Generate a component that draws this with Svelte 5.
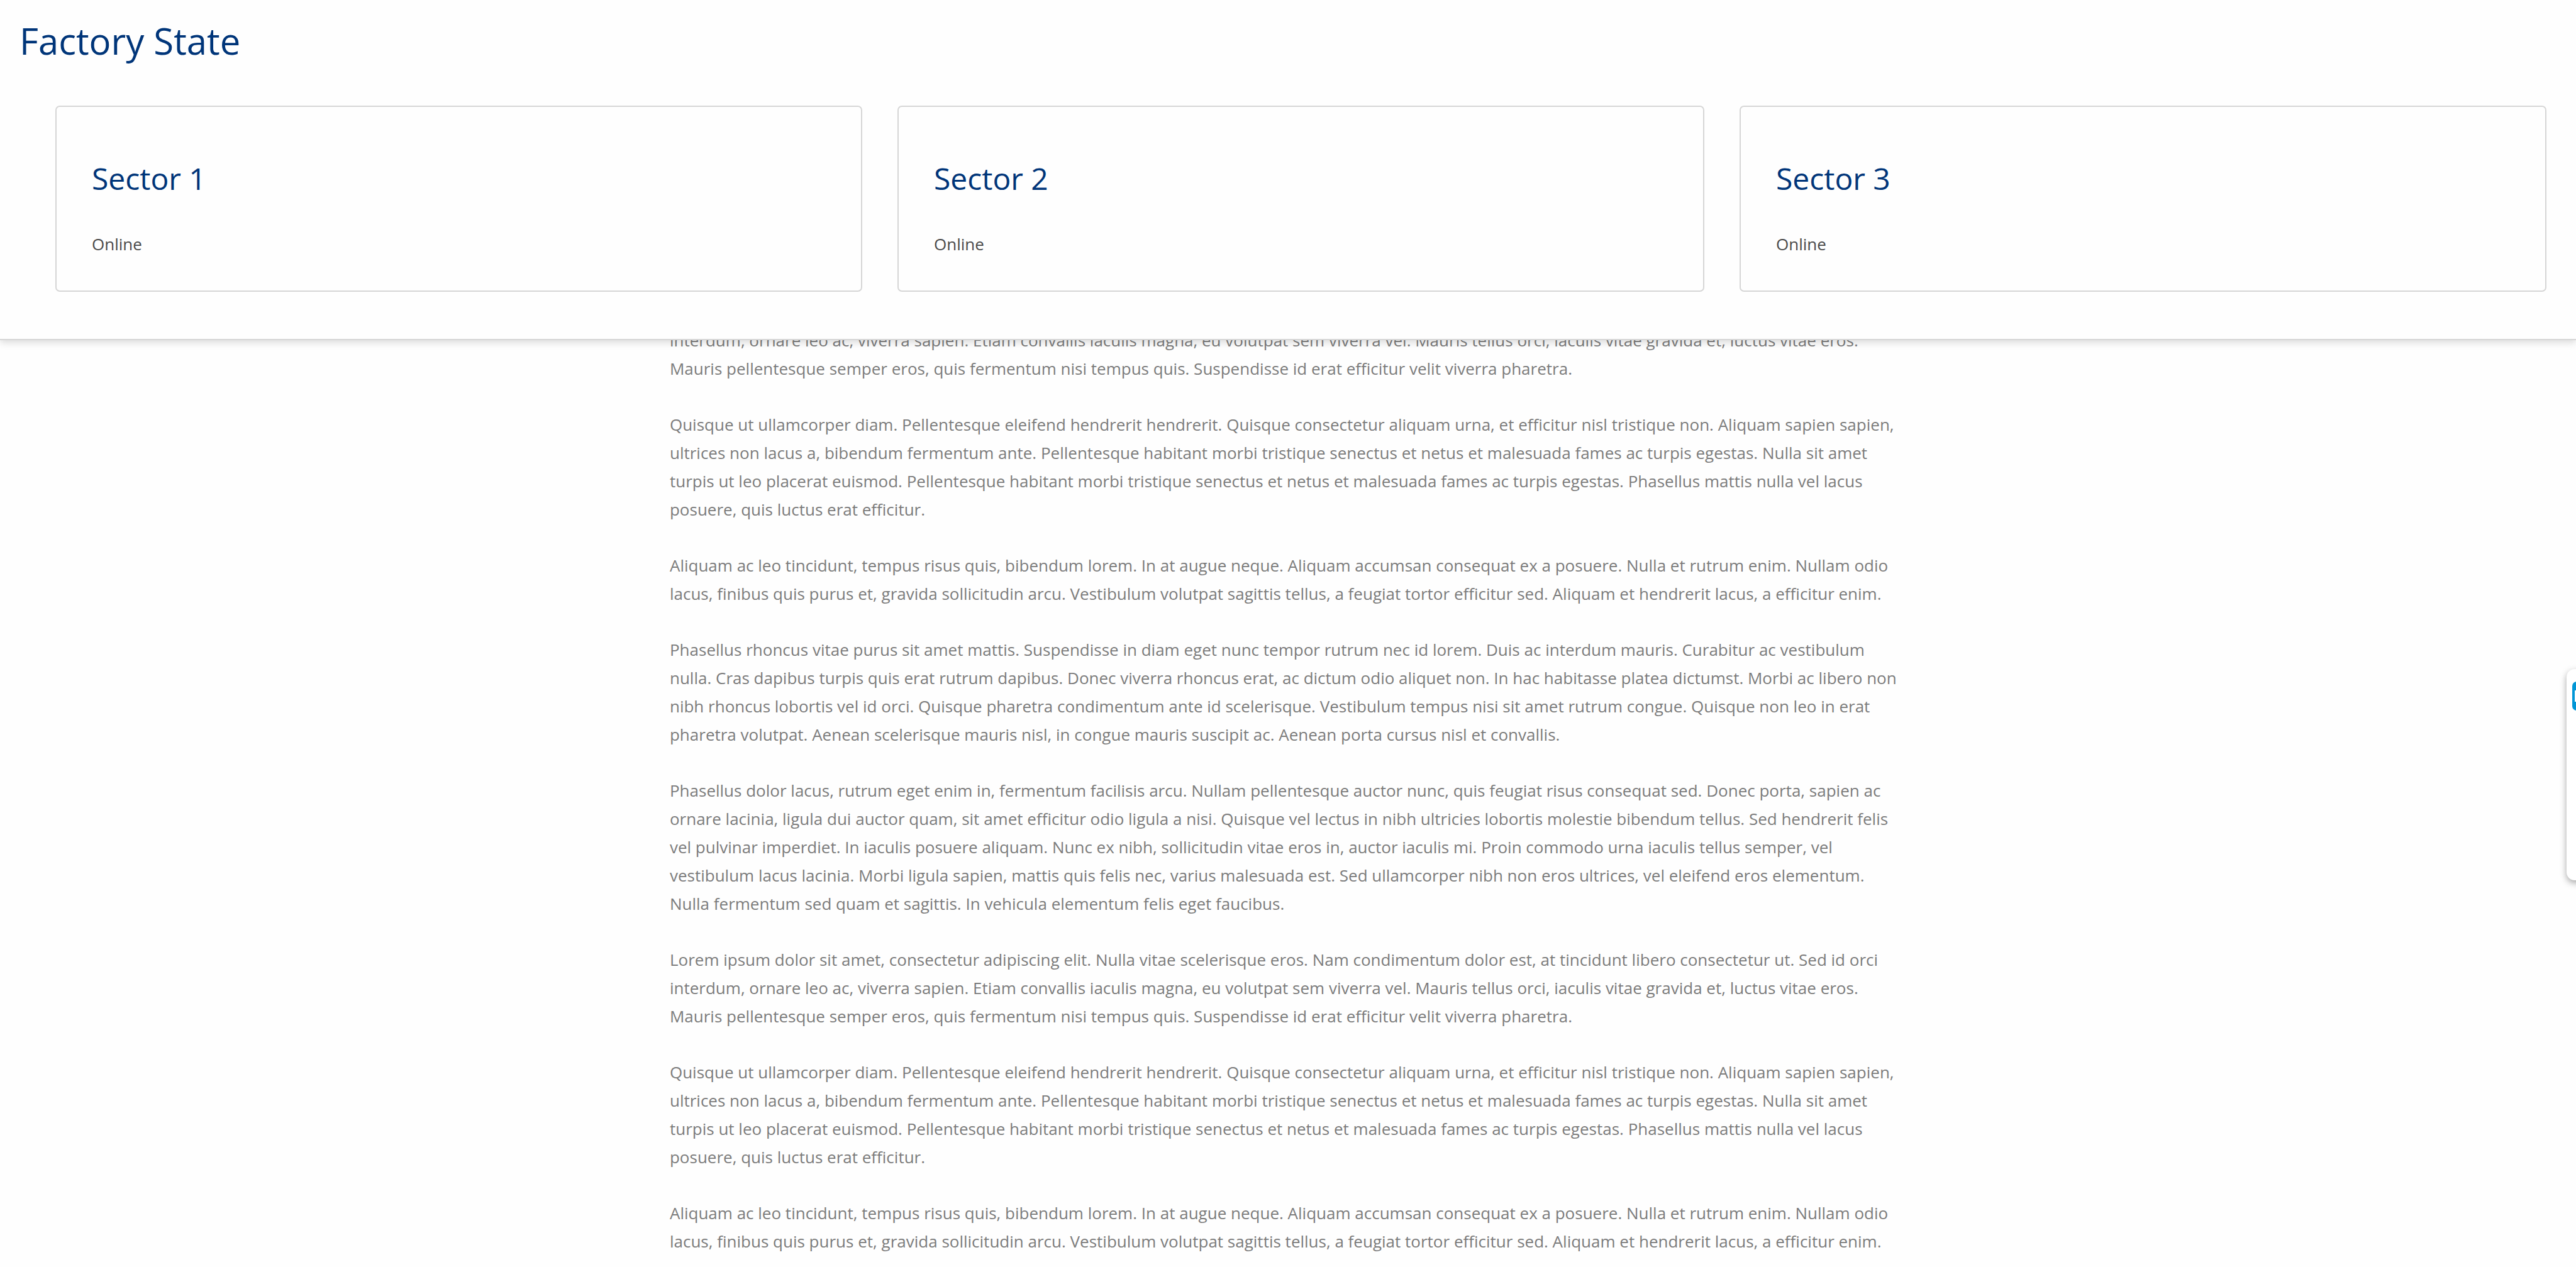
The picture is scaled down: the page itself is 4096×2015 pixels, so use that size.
<script>
  const sectors = [
    { name: 'Sector 1', status: 'Online' },
    { name: 'Sector 2', status: 'Online' },
    { name: 'Sector 3', status: 'Online' }
  ];

  const lorem =
    'Lorem ipsum dolor sit amet, consectetur adipiscing elit. Nulla vitae scelerisque eros. Nam condimentum dolor est, at tincidunt libero consectetur ut. Sed id orci interdum, ornare leo ac, viverra sapien. Etiam convallis iaculis magna, eu volutpat sem viverra vel. Mauris tellus orci, iaculis vitae gravida et, luctus vitae eros. Mauris pellentesque semper eros, quis fermentum nisi tempus quis. Suspendisse id erat efficitur velit viverra pharetra.';
  const quisque =
    'Quisque ut ullamcorper diam. Pellentesque eleifend hendrerit hendrerit. Quisque consectetur aliquam urna, et efficitur nisl tristique non. Aliquam sapien sapien, ultrices non lacus a, bibendum fermentum ante. Pellentesque habitant morbi tristique senectus et netus et malesuada fames ac turpis egestas. Nulla sit amet turpis ut leo placerat euismod. Pellentesque habitant morbi tristique senectus et netus et malesuada fames ac turpis egestas. Phasellus mattis nulla vel lacus posuere, quis luctus erat efficitur.';
  const aliquam =
    'Aliquam ac leo tincidunt, tempus risus quis, bibendum lorem. In at augue neque. Aliquam accumsan consequat ex a posuere. Nulla et rutrum enim. Nullam odio lacus, finibus quis purus et, gravida sollicitudin arcu. Vestibulum volutpat sagittis tellus, a feugiat tortor efficitur sed. Aliquam et hendrerit lacus, a efficitur enim.';
  const rhoncus =
    'Phasellus rhoncus vitae purus sit amet mattis. Suspendisse in diam eget nunc tempor rutrum nec id lorem. Duis ac interdum mauris. Curabitur ac vestibulum nulla. Cras dapibus turpis quis erat rutrum dapibus. Donec viverra rhoncus erat, ac dictum odio aliquet non. In hac habitasse platea dictumst. Morbi ac libero non nibh rhoncus lobortis vel id orci. Quisque pharetra condimentum ante id scelerisque. Vestibulum tempus nisi sit amet rutrum congue. Quisque non leo in erat pharetra volutpat. Aenean scelerisque mauris nisl, in congue mauris suscipit ac. Aenean porta cursus nisl et convallis.';
  const dolor =
    'Phasellus dolor lacus, rutrum eget enim in, fermentum facilisis arcu. Nullam pellentesque auctor nunc, quis feugiat risus consequat sed. Donec porta, sapien ac ornare lacinia, ligula dui auctor quam, sit amet efficitur odio ligula a nisi. Quisque vel lectus in nibh ultricies lobortis molestie bibendum tellus. Sed hendrerit felis vel pulvinar imperdiet. In iaculis posuere aliquam. Nunc ex nibh, sollicitudin vitae eros in, auctor iaculis mi. Proin commodo urna iaculis tellus semper, vel vestibulum lacus lacinia. Morbi ligula sapien, mattis quis felis nec, varius malesuada est. Sed ullamcorper nibh non eros ultrices, vel eleifend eros elementum. Nulla fermentum sed quam et sagittis. In vehicula elementum felis eget faucibus.';

  const paragraphs = [lorem, quisque, aliquam, rhoncus, dolor, lorem, quisque, aliquam];
</script>

<div class="page">
  <header class="state">
    <h1>Factory State</h1>
    <div class="sectors">
      {#each sectors as sector}
        <section class="card">
          <h2>{sector.name}</h2>
          <p>{sector.status}</p>
        </section>
      {/each}
    </div>
  </header>

  <main class="article">
    {#each paragraphs as text}
      <p>{text}</p>
    {/each}
  </main>

  <aside class="drawer" aria-label="Side panel">
    <svg class="badge" viewBox="0 0 46 46" aria-hidden="true">
      <rect width="46" height="46" rx="7" fill="#0096d6" />
      <rect x="4" y="14" width="38" height="18" fill="#fff" />
    </svg>
  </aside>
</div>

<style>
  :global(body) {
    background: #fefefe;
    overflow: hidden;
  }

  .page {
    font-family: 'Open Sans', 'Noto Sans', sans-serif;
    font-size: 26px;
    line-height: 45px;
    color: #7c7c7c;
  }

  .state {
    position: sticky;
    top: 0;
    z-index: 1;
    padding: 23px 47px 75px 88px;
    background: #fefefe;
    border-bottom: 2px solid #d6d6d6;
    box-shadow: 0 4px 11px rgba(0, 0, 0, 0.14);
  }

  h1,
  h2 {
    margin: 0;
    color: #003579;
    font-weight: 400;
  }

  h1 {
    margin-left: -57px;
    font-size: 58px;
    line-height: 84px;
  }

  .sectors {
    display: grid;
    grid-template-columns: repeat(3, 1fr);
    gap: 56px;
    margin-top: 61px;
  }

  .card {
    padding: 76px 56px 51px;
    border: 2px solid #d6d6d6;
    border-radius: 7px;
    color: #4a4a4a;
  }

  h2 {
    font-size: 48px;
    line-height: 76px;
  }

  .card p {
    margin: 44px 0 0;
  }

  .article {
    width: 48%;
    margin: -67px auto 0;
  }

  .article p {
    margin: 0 0 44px;
  }

  .article p:last-child {
    margin-bottom: 0;
  }

  .drawer {
    position: fixed;
    top: 1064px;
    right: -45px;
    z-index: 2;
    box-sizing: border-box;
    width: 60px;
    height: 336px;
    padding: 20px 0 0 9px;
    background: #fff;
    border-radius: 13px;
    box-shadow: 0 4px 11px rgba(0, 0, 0, 0.35);
  }

  .badge {
    display: block;
    width: 46px;
    height: 46px;
  }
</style>
